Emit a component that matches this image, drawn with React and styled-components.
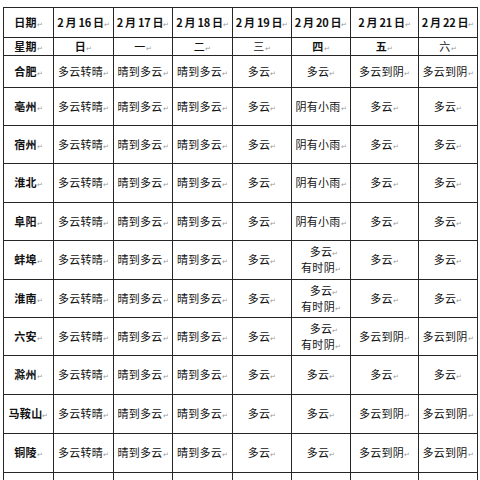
import styled, { createGlobalStyle } from 'styled-components';

const Global = createGlobalStyle`
  html, body {
    margin: 0;
    background: #fff;
    overflow: hidden;
  }
  body {
    font-family: "Noto Sans CJK SC", "Liberation Sans", sans-serif;
    color: #111;
  }
`;

const Page = styled.div`
  padding: 7px 0 0 3px;
  width: 480px;
  height: 480px;
  box-sizing: border-box;
`;

const Sheet = styled.table`
  border-collapse: collapse;
  table-layout: fixed;
  width: 474px;
  font-size: 11px;
  line-height: 14px;
`;

const Row = styled.tr`
  height: ${(p) => p.$h}px;
`;

const Cell = styled.td`
  border: 1px solid #262626;
  padding: 0;
  text-align: center;
  vertical-align: middle;
  white-space: nowrap;
  overflow: hidden;
  font-weight: ${(p) => (p.$bold ? 700 : 400)};
  letter-spacing: ${(p) => (p.$tight ? '-0.3px' : '0.3px')};
`;

const Mark = styled.span`
  font-size: 7px;
  color: #9a9a9a;
  font-weight: 400;
  letter-spacing: 0;
`;

const Line = styled.div`
  padding-left: ${(p) => (p.$shift ? 6 : 0)}px;
`;

const widths = [50, 60, 59, 60, 59, 59, 68, 59];

const dates = ['2 月 16 日', '2 月 17 日', '2 月 18 日', '2 月 19 日', '2 月 20 日', '2 月 21 日', '2 月 22 日'];
const weekdays = [
  ['日', true],
  ['一', false],
  ['二', false],
  ['三', false],
  ['四', true],
  ['五', true],
  ['六', false],
];

const rain = ['多云转晴', '晴到多云', '晴到多云', '多云', '阴有小雨', '多云', '多云'];
const overcast = ['多云转晴', '晴到多云', '晴到多云', '多云', '多云|有时阴', '多云', '多云'];

const cities = [
  ['合肥', ['多云转晴', '晴到多云', '晴到多云', '多云', '多云', '多云到阴', '多云到阴'], 32],
  ['亳州', rain, 38],
  ['宿州', rain, 38],
  ['淮北', rain, 39],
  ['阜阳', rain, 38],
  ['蚌埠', overcast, 39],
  ['淮南', overcast, 38],
  ['六安', ['多云转晴', '晴到多云', '晴到多云', '多云', '多云|有时阴', '多云到阴', '多云到阴'], 38],
  ['滁州', ['多云转晴', '晴到多云', '晴到多云', '多云', '多云', '多云', '多云'], 39],
  ['马鞍山', ['多云转晴', '晴到多云', '晴到多云', '多云', '多云', '多云到阴', '多云到阴'], 39],
  ['铜陵', ['多云转晴', '晴到多云', '晴到多云', '多云', '多云', '多云到阴', '多云到阴'], 39],
  ['', ['', '', '', '', '', '', ''], 39],
];

const Text = ({ children }) => {
  if (!children) return null;
  const parts = children.split('|');
  if (parts.length === 1) {
    return (
      <>
        {children}
        <Mark>↵</Mark>
      </>
    );
  }
  return parts.map((p, i) => (
    <Line key={i} $shift={i === 0}>
      {p}
      <Mark>↵</Mark>
    </Line>
  ));
};

export default function App() {
  return (
    <Page>
      <Global />
      <Sheet>
        <colgroup>
          {widths.map((w, i) => (
            <col key={i} style={{ width: w }} />
          ))}
        </colgroup>
        <tbody>
          <Row $h={30}>
            <Cell $bold>
              <Text>日期</Text>
            </Cell>
            {dates.map((d) => (
              <Cell key={d} $bold $tight>
                <Text>{d}</Text>
              </Cell>
            ))}
          </Row>
          <Row $h={18}>
            <Cell $bold>
              <Text>星期</Text>
            </Cell>
            {weekdays.map(([w, b]) => (
              <Cell key={w} $bold={b}>
                <Text>{w}</Text>
              </Cell>
            ))}
          </Row>
          {cities.map(([name, days, h], r) => (
            <Row key={r} $h={h}>
              <Cell $bold>
                <Text>{name}</Text>
              </Cell>
              {days.map((d, i) => (
                <Cell key={i}>
                  <Text>{d}</Text>
                </Cell>
              ))}
            </Row>
          ))}
        </tbody>
      </Sheet>
    </Page>
  );
}
